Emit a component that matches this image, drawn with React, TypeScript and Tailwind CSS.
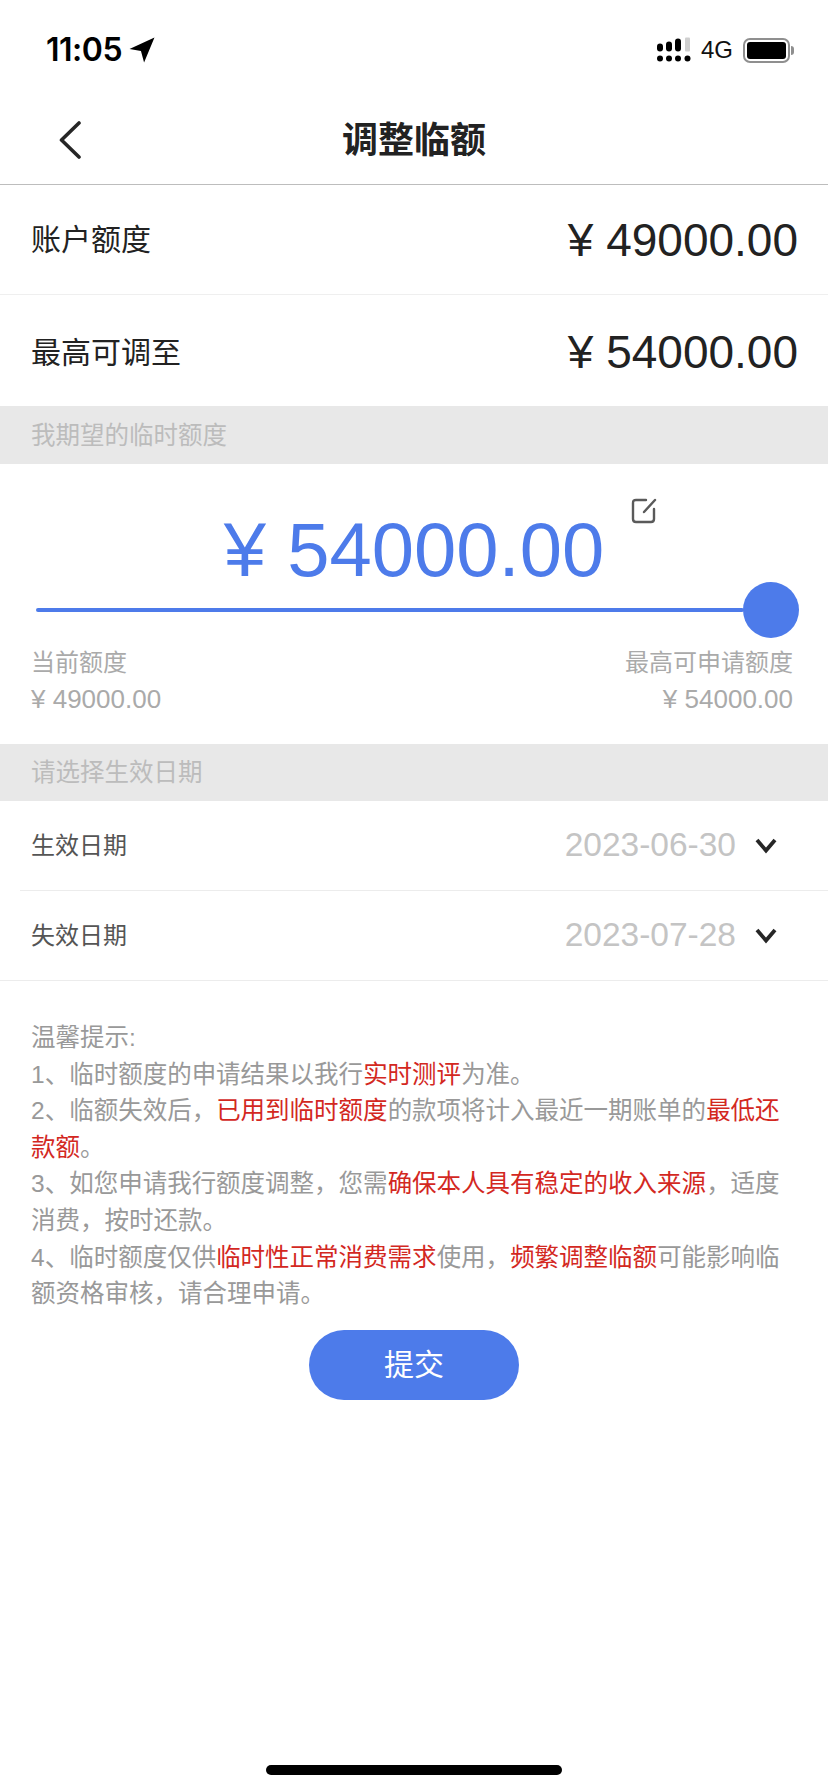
import React from 'react';

const SANS = 'font-["Liberation_Sans","Noto_Sans_CJK_SC",sans-serif]';

const SummaryRow = ({ label, value, className }: { label: string; value: string; className?: string }) => (
  <div className={`flex items-center justify-between pl-[31px] pr-[30px] ${className ?? ''}`}>
    <span className="text-[30px] text-[#222]">{label}</span>
    <span className="text-[46px] leading-none text-[#222]">{value}</span>
  </div>
);

const SectionBar = ({ children, className }: { children: React.ReactNode; className?: string }) => (
  <div className={`flex items-center bg-[#e8e8e8] pl-[31px] pt-[2px] text-[24.5px] text-[#bcbcbc] ${className ?? ''}`}>{children}</div>
);

const DateRow = ({ label, value, inset }: { label: string; value: string; inset?: boolean }) => (
  <div className={`flex h-[90px] items-center justify-between border-b border-[#ececec] pr-[51px] ${inset ? 'ml-[20px] pl-[11px]' : 'pl-[31px]'}`}>
    <span className="text-[24px] text-[#555]">{label}</span>
    <div className="flex items-center gap-[19px]">
      <span className="text-[33.5px] text-[#c4c4c4]">{value}</span>
      <svg width="22" height="16" viewBox="0 0 22 16" fill="none" stroke="#262626" strokeWidth="3.8" strokeLinejoin="miter">
        <path d="M2 2 L11 12.5 L20 2" />
      </svg>
    </div>
  </div>
);

const Red = ({ children }: { children: React.ReactNode }) => <span className="text-[#d3281f]">{children}</span>;

const StatusBar = () => (
  <div className="flex h-[92px] items-center justify-between pl-[46px] pr-[34px] pt-[8px] text-black">
    <div className="flex items-center gap-[7px]">
      <span className='font-["Inter",sans-serif] text-[32px] font-semibold leading-none tracking-[-0.5px]'>11:05</span>
      <svg width="26" height="26" viewBox="0 0 25 25" fill="#000">
        <path d="M24.5 0.5 L14.5 24.5 L11.5 13.5 L0.5 11.5 Z" />
      </svg>
    </div>
    <div className="flex items-center">
      <svg width="34" height="27" viewBox="0 0 34 26" fill="#000">
        <rect x="0" y="6" width="6" height="8" rx="3" />
        <rect x="9" y="4" width="6" height="10" rx="3" />
        <rect x="18" y="1" width="6" height="13" rx="3" />
        <rect x="28" y="0" width="5" height="14" rx="1" fill="#cfcfcf" />
        <circle cx="3" cy="21" r="3" />
        <circle cx="12" cy="21" r="3" />
        <circle cx="21" cy="21" r="3" />
        <circle cx="30.5" cy="21" r="3" />
      </svg>
      <span className="ml-[10px] text-[24px] leading-none text-[#111]">4G</span>
      <div className="ml-[10px] flex h-[25px] w-[47px] items-center justify-center rounded-[7px] border-2 border-[#8f8f8f]">
        <div className="h-[17px] w-[39px] rounded-[3px] bg-black" />
      </div>
      <div className="ml-[1px] h-[9px] w-[3px] rounded-r-full bg-[#8f8f8f]" />
    </div>
  </div>
);

export default function App() {
  return (
    <div className={`flex min-h-[1792px] flex-col bg-white ${SANS}`}>
      <StatusBar />

      {/* Nav */}
      <div className="relative flex h-[93px] items-center justify-center border-b border-[#bdbdbd] pt-[5px]">
        <svg className="absolute left-[59px] top-[29px]" width="22" height="38" viewBox="0 0 22 38" fill="none" stroke="#262626" strokeWidth="3.6" strokeLinecap="round" strokeLinejoin="round">
          <path d="M20 2 L2.5 19 L20 36" />
        </svg>
        <span className="text-[36px] font-bold text-[#222]">调整临额</span>
      </div>

      <SummaryRow label="账户额度" value="¥ 49000.00" className="h-[110px] border-b border-[#efefef]" />
      <SummaryRow label="最高可调至" value="¥ 54000.00" className="h-[111px] pt-[3px]" />

      <SectionBar className="h-[58px]">我期望的临时额度</SectionBar>

      {/* Amount + slider */}
      <div className="h-[280px] px-[31px]">
        <div className="relative flex h-[118px] items-end justify-center">
          <span className="-mb-[6px] text-[76px] leading-none text-[#4d7bea]">¥ 54000.00</span>
          <svg className="absolute left-[600px] top-[34px]" width="26" height="26" viewBox="0 0 26 26" fill="none" stroke="#5a5a5a" strokeWidth="2.4" strokeLinecap="round" strokeLinejoin="round">
            <path d="M15 2 H5 Q2 2 2 5 V21 Q2 24 5 24 H20 Q23 24 23 21 V11" />
            <path d="M24 2 L13 14" />
          </svg>
        </div>
        <div className="flex h-[56px] items-center pl-[5px]">
          <div className="h-[4px] flex-1 rounded-full bg-[#4d7bea]" />
          <div className="ml-[-1px] mr-[-2px] h-[56px] w-[56px] rounded-full bg-[#4d7bea]" />
        </div>
        <div className="mt-[7px] flex justify-between text-[24px] leading-[36px] text-[#aaaaaa]">
          <div>
            <div>当前额度</div>
            <div className="text-[26px]">¥ 49000.00</div>
          </div>
          <div className="pr-[4px] text-right">
            <div>最高可申请额度</div>
            <div className="text-[26px]">¥ 54000.00</div>
          </div>
        </div>
      </div>

      <SectionBar className="h-[57px]">请选择生效日期</SectionBar>

      <DateRow label="生效日期" value="2023-06-30" inset />
      <DateRow label="失效日期" value="2023-07-28" />

      {/* Tips */}
      <div className="pl-[31px] pr-[48px] pt-[39px] text-[24.5px] leading-[36.6px] text-[#999]">
        <div>温馨提示:</div>
        <div>1、临时额度的申请结果以我行<Red>实时测评</Red>为准。</div>
        <div>2、临额失效后，<Red>已用到临时额度</Red>的款项将计入最近一期账单的<Red>最低还款额</Red>。</div>
        <div>3、如您申请我行额度调整，您需<Red>确保本人具有稳定的收入来源</Red>，适度消费，按时还款。</div>
        <div>4、临时额度仅供<Red>临时性正常消费需求</Red>使用，<Red>频繁调整临额</Red>可能影响临额资格审核，请合理申请。</div>
      </div>

      <div className="mt-[17px] flex justify-center">
        <button className="h-[70px] w-[210px] rounded-[35px] bg-[#4d7bea] text-[30px] text-white">提交</button>
      </div>

      <div className="mt-auto flex justify-center pb-[17px]">
        <div className="h-[10px] w-[296px] rounded-full bg-black" />
      </div>
    </div>
  );
}
